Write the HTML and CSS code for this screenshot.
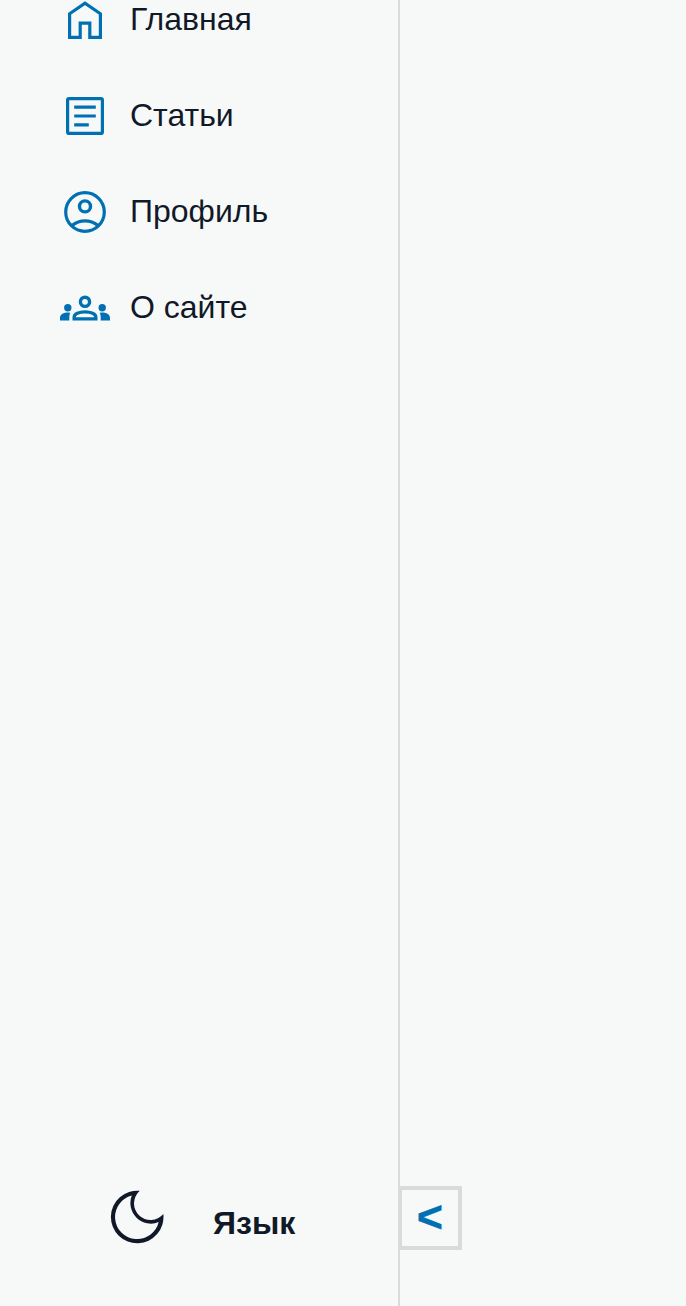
FILE: index.html
```html
<!DOCTYPE html>
<html lang="ru">
<head>
<meta charset="utf-8">
<title>Меню</title>
<link rel="stylesheet" href="styles.css">
</head>
<body>
<aside class="sidebar">
  <nav class="menu">
    <a class="item">
      <svg class="icon" viewBox="0 0 50 50"><path d="M9.6 42.4V18.8L25 8.2l15.4 10.6v23.6H29.8V28.2h-9.6v14.2z"/></svg>
      <span>Главная</span>
    </a>
    <a class="item">
      <svg class="icon" viewBox="0 0 50 50"><rect x="7.6" y="7.6" width="34.8" height="34.8" rx="1.5"/><path d="M14.2 16.1h21.6M14.2 25h21.6M14.2 33.9h14.6"/></svg>
      <span>Статьи</span>
    </a>
    <a class="item">
      <svg class="icon" viewBox="0 0 50 50"><circle cx="25" cy="25" r="19.3"/><circle class="head" cx="25" cy="19.4" r="5.5"/><path d="M11.8 38.6Q18 33.9 25 33.9T38.2 38.6"/></svg>
      <span>Профиль</span>
    </a>
    <a class="item">
      <svg class="icon" viewBox="0 0 50 50"><circle class="head" cx="25" cy="18.8" r="4.6"/><path d="M14.1 35.9v-1.6c0-3.4 5-5.5 10.9-5.5s10.9 2.1 10.9 5.5v1.6z"/><g class="solid"><circle cx="7.8" cy="24.8" r="3.7"/><circle cx="42.2" cy="24.8" r="3.7"/><path d="M0 37.5v-2.8c0-3.4 3.9-5.2 8-5.2l2.3.2a8 8 0 0 0-1 4v3.8zM50 37.5v-2.8c0-3.4-3.9-5.2-8-5.2l-2.3.2a8 8 0 0 1 1 4v3.8z"/></g></svg>
      <span>О сайте</span>
    </a>
  </nav>
  <div class="switchers">
    <svg class="moon" viewBox="0 0 54 54"><path fill-rule="evenodd" d="M29.77.83A26.3 26.3 0 1 0 53.33 24.07A16.6 16.6 0 1 1 29.77.83zM21.77 5.58A22.1 22.1 0 1 0 48.69 32.12A20.6 20.6 0 0 1 21.77 5.58z"/></svg>
    <button class="lang">Язык</button>
  </div>
  <button class="toggle">&lt;</button>
</aside>
</body>
</html>
```
FILE: styles.css
```css
* { box-sizing: border-box; }
body {
  margin: 0;
  background: #f7f9f9;
  color: #111928;
  font: 32px/36px "Liberation Sans", Arial, sans-serif;
}
button {
  padding: 0;
  border: 0;
  background: none;
  color: inherit;
  font: inherit;
  font-weight: 700;
}
.sidebar {
  position: relative;
  display: flex;
  flex-direction: column;
  justify-content: space-between;
  width: 400px;
  height: 1306px;
  border-right: 2px solid #d8dbda;
}
.menu {
  display: flex;
  flex-direction: column;
  gap: 46px;
  margin-top: -5px;
  padding-left: 60px;
}
.item {
  display: flex;
  align-items: center;
  gap: 20px;
  height: 50px;
}
.item span { padding-bottom: 2px; }
.icon {
  width: 50px;
  height: 50px;
  fill: none;
  stroke: #0070b3;
  stroke-width: 3.2;
}
.head { stroke-width: 3.4; }
.solid {
  fill: #0070b3;
  stroke: none;
}
.switchers {
  display: flex;
  align-items: center;
  gap: 49px;
  padding: 0 0 62px 110px;
}
.moon {
  width: 54px;
  height: 54px;
  fill: #111928;
}
.lang { padding-top: 12px; }
.toggle {
  position: absolute;
  left: 398px;
  bottom: 56px;
  width: 64px;
  height: 64px;
  padding-bottom: 2px;
  border: 4px solid #d8dbda;
  color: #0070b3;
  font-size: 45px;
  line-height: 54px;
  -webkit-text-stroke: 0.4px #0070b3;
}
```
